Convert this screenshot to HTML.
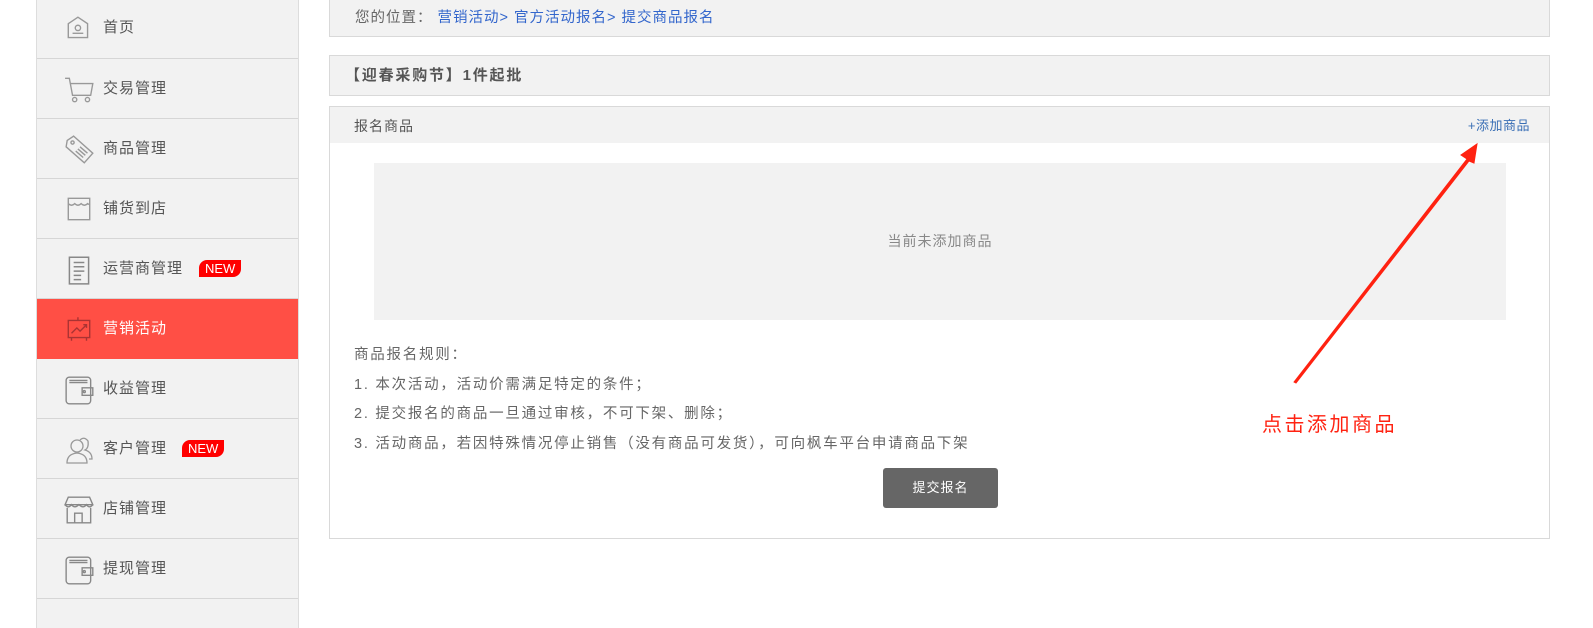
<!DOCTYPE html>
<html><head><meta charset="utf-8"><style>
*{margin:0;padding:0;box-sizing:border-box}
body{width:1593px;height:620px;background:#fff;font-family:"Liberation Sans","Noto Sans CJK SC",sans-serif;font-size:14px;color:#666;position:relative;overflow:hidden;letter-spacing:1px}
.side{position:absolute;left:36px;top:-2px;width:263px;height:630px;background:#f2f2f2;border-left:1px solid #ddd;border-right:1px solid #ddd}
.item{height:60px;border-bottom:1px solid #d6d6d6;position:relative;font-size:15px;color:#555;line-height:60px;padding-left:66px}
.item svg{position:absolute;left:27px;top:15px}
.item.act{background:#ff4f45;color:#fff;border-bottom-color:#ff4f45}
.new{position:absolute;top:21px;background:#f00;color:#fff;font-size:13px;line-height:17px;height:17px;padding:0 6px 0 6px;border-radius:8px 0 8px 0;letter-spacing:0}
.box{position:absolute;left:329px;width:1221px;border:1px solid #d9d9d9;background:#f2f2f2}
a{color:#3366cc;text-decoration:none}
</style></head><body>
<div class="side">
<div class="item" style="height:61px"><svg width="30" height="30" viewBox="0 0 28 28" fill="none" stroke="#999" stroke-width="1.3" style="top:16px"><path d="M4 9 L13 3 L22 9 V22 H4 Z"/><circle cx="13" cy="13" r="2.5"/><path d="M8 18 H18"/></svg>首页</div>
<div class="item"><svg width="32" height="32" viewBox="0 0 30 30" fill="none" stroke="#999" stroke-width="1.3"><path d="M1 4 H5 L8 20 H25 L27 9 H6"/><circle cx="10" cy="24" r="2"/><circle cx="22" cy="24" r="2"/></svg>交易管理</div>
<div class="item"><svg width="32" height="32" viewBox="0 0 30 30" fill="none" stroke="#999" stroke-width="1.3"><path d="M3 6 L9 2 L27 18 L19 27 L2 12 Z"/><circle cx="8" cy="8" r="1.5"/><path d="M13 14 L20 20 M15 12 L22 18 M11 16 L18 22"/></svg>商品管理</div>
<div class="item"><svg width="30" height="30" viewBox="0 0 28 28" fill="none" stroke="#999" stroke-width="1.3"><path d="M4 4 H24 V24 H4 Z"/><path d="M4 9 Q7 12 10 9 Q13 12 16 9 Q19 12 22 9 Q23 10 24 9"/></svg>铺货到店</div>
<div class="item"><svg width="30" height="32" viewBox="0 0 28 30" fill="none" stroke="#888" stroke-width="1.4"><path d="M5 3 H23 V28 H5 Z"/><path d="M9 8 H19 M9 12 H19 M9 16 H19 M9 20 H16 M9 24 H16"/></svg>运营商管理<span class="new" style="left:162px">NEW</span></div>
<div class="item act"><svg width="30" height="30" viewBox="0 0 28 28" fill="none" stroke="#a33" stroke-width="1.3"><path d="M4 6 H24 V22 H4 Z M13 3 V6 M7 22 V25 M21 22 V25"/><path d="M7 18 L12 13 L15 16 L21 10 M18 10 H21 V13"/></svg>营销活动</div>
<div class="item"><svg width="32" height="32" viewBox="0 0 30 30" fill="none" stroke="#888" stroke-width="1.3"><rect x="2" y="3" width="23" height="25" rx="3"/><path d="M5 6 H22 M5 8 H22 M17 13 H27 V20 H17 Z"/><circle cx="19" cy="16.5" r="1"/></svg>收益管理</div>
<div class="item"><svg width="32" height="32" viewBox="0 0 32 32" fill="none" stroke="#999" stroke-width="1.3"><circle cx="13" cy="12" r="6"/><path d="M3 29 Q3 20 13 19 Q23 20 23 29 Z"/><path d="M16 6 Q20 2 24 7 Q25 14 21 16 Q28 18 28 25 H25"/></svg>客户管理<span class="new" style="left:145px">NEW</span></div>
<div class="item"><svg width="32" height="32" viewBox="0 0 30 30" fill="none" stroke="#888" stroke-width="1.3"><path d="M4 3 H24 L27 10 H1 Z"/><path d="M1 10 Q4 14 7 10 Q10 14 14 10 Q18 14 21 10 Q24 14 27 10"/><path d="M3 13 V27 H25 V13 M10 27 V18 H17 V27"/></svg>店铺管理</div>
<div class="item"><svg width="32" height="32" viewBox="0 0 30 30" fill="none" stroke="#888" stroke-width="1.3"><rect x="2" y="3" width="23" height="25" rx="3"/><path d="M5 6 H22 M5 8 H22 M17 13 H27 V20 H17 Z"/><circle cx="19" cy="16.5" r="1"/></svg>提现管理</div>
</div>

<div class="box" style="top:-2px;height:39px;line-height:38px;padding-left:25px;font-size:14.5px">您的位置： <a>营销活动&gt;</a> <a>官方活动报名&gt;</a> <a>提交商品报名</a></div>
<div class="box" style="top:55px;height:41px;line-height:40px;padding-left:15px;font-weight:bold;color:#555;font-size:15px;letter-spacing:1.8px">【迎春采购节】1件起批</div>
<div class="box" style="top:106px;height:433px;background:#fff">
<div style="height:36px;background:#f2f2f2;line-height:38px;padding-left:24px;color:#555">报名商品<span style="position:absolute;right:19px;top:0;color:#3a6fb5;font-size:13px;letter-spacing:0.5px">+添加商品</span></div>
<div style="position:absolute;left:44px;top:56px;width:1132px;height:157px;background:#f2f2f2;text-align:center;line-height:157px;color:#888">当前未添加商品</div>
<div style="position:absolute;left:24px;top:234px;line-height:29.5px;color:#666;font-size:14.5px;letter-spacing:1.75px">商品报名规则：<br>1. 本次活动，活动价需满足特定的条件；<br>2. 提交报名的商品一旦通过审核，不可下架、删除；<br>3. 活动商品，若因特殊情况停止销售（没有商品可发货），可向枫车平台申请商品下架</div>
<div style="position:absolute;left:553px;top:361px;width:115px;height:40px;background:#666;border-radius:3px;color:#fff;text-align:center;line-height:40px;font-size:13px">提交报名</div>
</div>
<svg style="position:absolute;left:0;top:0" width="1593" height="620"><polygon points="1294,382 1467,159 1461,155 1477,144 1474,163 1469,161 1296,383" fill="#f21" stroke="#f21" stroke-width="1"/></svg>
<div style="position:absolute;left:1262px;top:408px;color:#f21;font-size:20px;letter-spacing:2.5px">点击添加商品</div>
</body></html>
